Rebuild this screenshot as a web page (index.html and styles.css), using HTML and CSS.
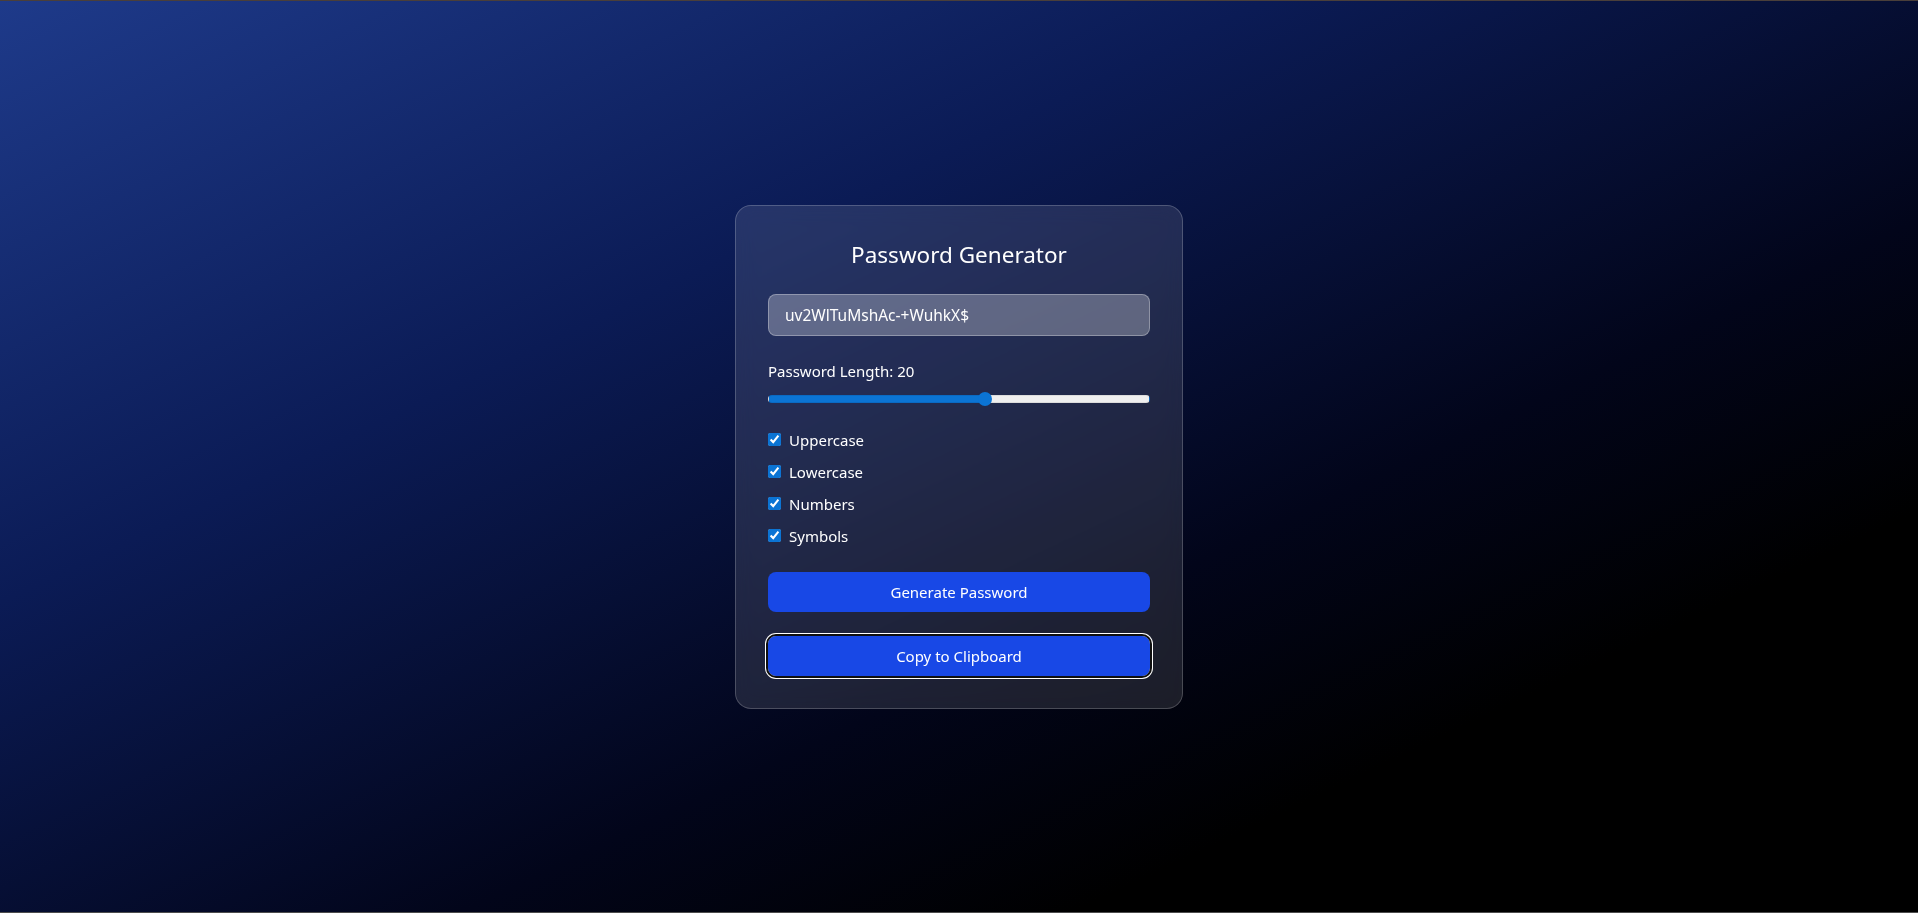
FILE: index.html
```html
<!DOCTYPE html>
<html lang="en">
<head>
<meta charset="utf-8">
<title>Password Generator</title>
<link rel="stylesheet" href="styles.css">
</head>
<body>
<main class="page">
  <section class="card">
    <h1 class="title">Password Generator</h1>
    <input class="output" type="text" value="uv2WlTuMshAc-+WuhkX$" readonly>
    <label class="length-label" for="len">Password Length: 20</label>
    <input class="slider" id="len" type="range" min="4" max="32" value="20" style="--p: 57.1%">
    <div class="options">
      <label class="option"><input type="checkbox" checked><span>Uppercase</span></label>
      <label class="option"><input type="checkbox" checked><span>Lowercase</span></label>
      <label class="option"><input type="checkbox" checked><span>Numbers</span></label>
      <label class="option"><input type="checkbox" checked><span>Symbols</span></label>
    </div>
    <button class="btn" type="button">Generate Password</button>
    <button class="btn btn-focus" type="button">Copy to Clipboard</button>
  </section>
</main>
</body>
</html>
```
FILE: styles.css
```css
* { box-sizing: border-box; }
html, body { margin: 0; padding: 0; height: 100%; overflow: hidden; }
body {
  font-family: "Noto Sans", "Open Sans", sans-serif;
  color: #fff;
  background: #000;
}
.page {
  height: 913px;
  border-top: 1px solid #4a3f3a;
  border-bottom: 1px solid #4d4d4d;
  background: linear-gradient(to bottom right, #1e3a8a 0%, #0b1b55 33%, #02051a 62%, #000 78%);
  display: flex;
  align-items: center;
  justify-content: center;
}
.card {
  width: 448px;
  padding: 32px;
  border: 1px solid rgba(255,255,255,0.2);
  border-radius: 16px;
  background: rgba(255,255,255,0.11);
  backdrop-filter: blur(10px);
  display: flex;
  flex-direction: column;
}
.title {
  margin: 0 0 24px;
  font-size: 22.5px;
  line-height: 32px;
  font-weight: 400;
  text-align: center;
  padding-top: 1px;
  height: 32px;
}
.output {
  height: 42px;
  padding: 8px 16px;
  border: 1px solid rgba(255,255,255,0.3);
  border-radius: 8px;
  background: rgba(255,255,255,0.28);
  color: #fff;
  font-family: inherit;
  font-size: 15.5px;
  line-height: 24px;
  margin: 0 0 24px;
  outline: none;
}
.length-label {
  font-size: 15px;
  line-height: 24px;
  display: block;
  margin-top: -1px;
}
.slider {
  -webkit-appearance: none;
  appearance: none;
  width: 100%;
  height: 16px;
  margin: 8px 0 21px;
  background: transparent;
}
.slider::-webkit-slider-runnable-track {
  height: 8px;
  border-radius: 4px;
  background: linear-gradient(to right, #0b74d4 0, #0b74d4 var(--p), #efefef var(--p), #efefef 100%);
  border: 1px solid rgba(0,0,0,0.08);
}
.slider::-webkit-slider-thumb {
  -webkit-appearance: none;
  width: 14px;
  height: 14px;
  margin-top: -4px;
  border-radius: 50%;
  background: #0b74d4;
  border: none;
}
.options {
  display: flex;
  flex-direction: column;
  gap: 8px;
  margin-bottom: 24px;
}
.option {
  display: flex;
  align-items: center;
  font-size: 15px;
  line-height: 24px;
}
.option input {
  margin: 0 8px 0 0;
  width: 13px;
  height: 13px;
  accent-color: #0b74d4;
}
.btn {
  height: 40px;
  border: none;
  border-radius: 8px;
  background: #1848e6;
  color: #fff;
  font-family: inherit;
  font-size: 15px;
  line-height: 24px;
  padding: 8px 16px;
}
.btn + .btn { margin-top: 24px; }
.btn-focus {
  outline: 2px solid #101010;
  box-shadow: 0 0 0 3px #fff;
}
```
